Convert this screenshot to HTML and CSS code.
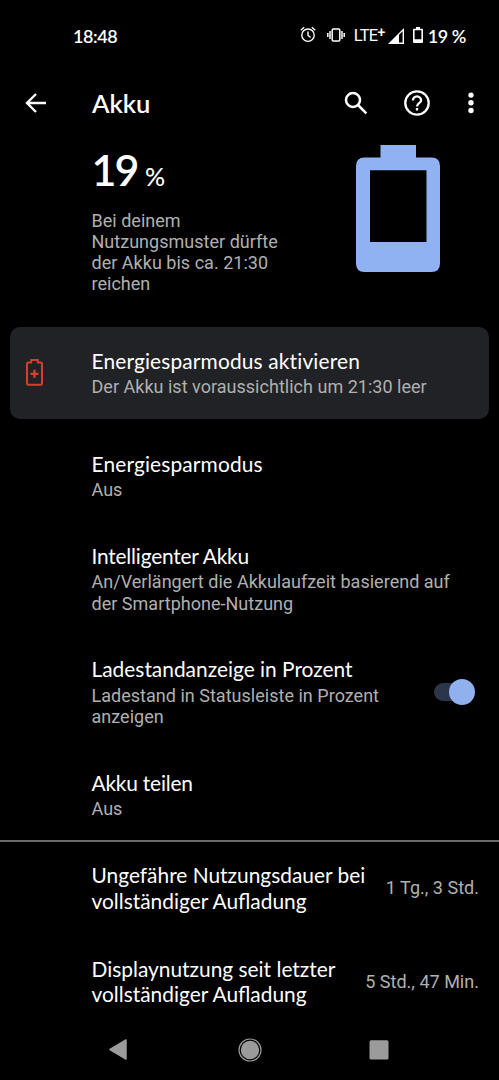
FILE: index.html
```
<!DOCTYPE html>
<html lang="de">
<head>
	<meta charset="utf-8">
	<title>Akku</title>
	<link rel="stylesheet" href="styles.css">
</head>
<body>
<div class="phone">
	<div class="status">
		<span class="clock">18:48</span>
		<div class="status-icons">
			<svg class="alarm" width="16" height="17" viewBox="0 0 16 17" fill="none" stroke="#fff" stroke-width="1.4">
				<circle cx="8" cy="9.2" r="6.2"/>
				<path d="M.8 4.2l3.4-2.9M15.2 4.2l-3.4-2.9M8 5.5v4l2.6 1.8"/>
			</svg>
			<svg class="vibrate" width="18" height="14" viewBox="0 0 18 14" fill="none" stroke="#fff" stroke-width="1.5">
				<rect x="5.2" y="1" width="7.6" height="12" rx="1"/>
				<path d="M3 3v8M15 3v8M.8 5v4M17.2 5v4"/>
			</svg>
			<span class="lte">LTE<sup>+</sup></span>
			<svg class="signal" width="16" height="16" viewBox="0 0 16 16">
				<path fill="#fff" fill-rule="evenodd" d="M16 0v16H0zM11 6.8V14.5h3.6V3.2z"/>
			</svg>
			<svg class="cell" width="10" height="16" viewBox="0 0 10 16">
				<path fill="#fff" fill-rule="evenodd" d="M3 0h4v1.7h2q1 0 1 1V15q0 1-1 1H1q-1 0-1-1V2.7q0-1 1-1h2zM1.6 3.3v9h6.8v-9z"/>
			</svg>
			<span class="level">19 %</span>
		</div>
	</div>

	<div class="toolbar">
		<svg class="back" width="22" height="20" viewBox="0 0 22 20" fill="none" stroke="#fff" stroke-width="2.4">
			<path d="M21 10H2M11 1L2 10l9 9"/>
		</svg>
		<h1>Akku</h1>
		<svg class="search" width="24" height="24" viewBox="0 0 24 24" fill="none" stroke="#fff" stroke-width="2.5">
			<circle cx="9" cy="9" r="7"/>
			<path d="M14 14l8.3 8.3"/>
		</svg>
		<svg class="help" width="26" height="26" viewBox="0 0 26 26" fill="none" stroke="#fff" stroke-width="2.3">
			<circle cx="13" cy="13" r="11.7"/>
			<path d="M8.9 10.4a4.1 4.1 0 1 1 8.2 0c0 2.6-4.1 3-4.1 6"/>
			<path d="M13 18v2.5"/>
		</svg>
		<svg class="more" width="6" height="22" viewBox="0 0 6 22" fill="#fff">
			<circle cx="3" cy="3.1" r="2.7"/>
			<circle cx="3" cy="10.8" r="2.7"/>
			<circle cx="3" cy="18.5" r="2.7"/>
		</svg>
	</div>

	<div class="summary">
		<div class="charge">
			<div class="percent">19 <small>%</small></div>
			<p class="sub">Bei deinem<br>Nutzungsmuster dürfte<br>der Akku bis ca. 21:30<br>reichen</p>
		</div>
		<svg class="battery" width="84" height="127" viewBox="0 0 84 127">
			<path fill="#91b2f2" fill-rule="evenodd" d="M24.500 0h35.500v12.500h15.500q8.500 0 8.500 8.500v97.500q0 8.500-8.500 8.500h-67q-8.500 0-8.500-8.500V21q0-8.500 8.500-8.500h16zM14 25.300v71.700h56.500v-71.700z"/>
		</svg>
	</div>

	<div class="tip">
		<svg class="tip-icon" width="17" height="27" viewBox="0 0 17 27" fill="none" stroke="#d53f30" stroke-width="2">
			<path d="M5.200 1h6.600v2.600h2.700q1.500 0 1.500 1.500v19.200q0 1.500-1.500 1.500h-12q-1.500 0-1.500-1.500V5.100q0-1.500 1.500-1.500h2.700z"/>
			<path stroke-width="2.300" d="M8.500 10.800v8M4.500 14.800h8"/>
		</svg>
		<div class="text">
			<div class="title wide">Energiesparmodus aktivieren</div>
			<div class="sub">Der Akku ist voraussichtlich um 21:30 leer</div>
		</div>
	</div>

	<div class="list">
		<div class="item">
			<div class="text">
				<div class="title wide">Energiesparmodus</div>
				<div class="sub">Aus</div>
			</div>
		</div>
		<div class="item">
			<div class="text">
				<div class="title narrow">Intelligenter Akku</div>
				<div class="sub">An/Verlängert die Akkulaufzeit basierend auf<br>der Smartphone-Nutzung</div>
			</div>
		</div>
		<div class="item">
			<div class="text">
				<div class="title">Ladestandanzeige in Prozent</div>
				<div class="sub">Ladestand in Statusleiste in Prozent<br>anzeigen</div>
			</div>
			<div class="switch"><span class="thumb"></span></div>
		</div>
		<div class="item">
			<div class="text">
				<div class="title narrow">Akku teilen</div>
				<div class="sub">Aus</div>
			</div>
		</div>
	</div>

	<div class="usage">
		<div class="item">
			<div class="title">Ungefähre Nutzungsdauer bei<br>vollständiger Aufladung</div>
			<span class="sub">1 Tg., 3 Std.</span>
		</div>
		<div class="item">
			<div class="title">Displaynutzung seit letzter<br>vollständiger Aufladung</div>
			<span class="sub">5 Std., 47 Min.</span>
		</div>
	</div>

	<div class="nav">
		<svg width="18" height="21" viewBox="0 0 18 21" fill="#9b9b9b" stroke="#9b9b9b" stroke-width="1.500" stroke-linejoin="round">
			<path d="M17 1v19L1 10.500z"/>
		</svg>
		<svg class="home" width="24" height="24" viewBox="0 0 24 24" fill="#9b9b9b">
			<circle cx="12" cy="12" r="9.200"/>
			<circle cx="12" cy="12" r="11" fill="none" stroke="#9b9b9b" stroke-width="1.200"/>
		</svg>
		<svg width="20" height="20" viewBox="0 0 20 20" fill="#9b9b9b">
			<rect x=".5" y=".3" width="19" height="19.200" rx="1.500"/>
		</svg>
	</div>
</div>
</body>
</html>
```
FILE: styles.css
```
* {
	box-sizing: border-box;
}
body, h1, p {
	margin: 0;
	padding: 0;
}
body {
	background: #000;
	color: #fff;
	font-family: Lato, "Open Sans", sans-serif;
}
svg {
	display: block;
	flex: none;
}
.phone {
	display: flex;
	flex-direction: column;
	width: 499px;
	height: 1080px;
	overflow: hidden;
	background: #000;
}
.status {
	display: flex;
	flex: none;
	align-items: center;
	justify-content: space-between;
	height: 71px;
	padding: 0 33px 0 73px;
	font-size: 18px;
	font-weight: 600;
	letter-spacing: -.4px;
	white-space: nowrap;
}
.status-icons {
	display: flex;
	align-items: center;
}
.alarm {
	margin-top: -2px;
}
.vibrate {
	margin: -1px 0 0 11px;
}
.lte {
	margin-left: 9px;
	font: 16.5px/20px Roboto, sans-serif;
	letter-spacing: -.7px;
}
.lte sup {
	font-size: 14px;
	font-weight: 500;
	line-height: 0;
	vertical-align: 4px;
}
.signal {
	margin-left: 3px;
}
.cell {
	margin: -2px 0 0 9px;
}
.level {
	margin-left: 5px;
}
.toolbar {
	display: flex;
	flex: none;
	align-items: center;
	height: 64px;
	padding: 0 25px;
}
.toolbar h1 {
	margin: 0 0 0 45px;
	font-size: 25.5px;
	line-height: 30px;
	font-weight: 600;
}
.search {
	margin-left: auto;
}
.help {
	margin-left: 36px;
}
.more {
	margin-left: 38px;
}
.summary {
	display: flex;
	flex: none;
	justify-content: space-between;
	height: 192px;
	padding: 10px 59px 0 91.5px;
}
.percent {
	height: 64.6px;
	font-size: 43px;
	line-height: 49px;
	font-weight: 600;
	letter-spacing: -2px;
}
.percent small {
	margin-left: -1px;
	font-size: 25px;
	font-weight: 500;
}
.sub {
	color: #b0b0b0;
	font: 18px/21.3px Roboto, sans-serif;
	letter-spacing: .02px;
	white-space: nowrap;
}
.title {
	color: #fff;
	font-size: 20.9px;
	line-height: 25.8px;
	white-space: nowrap;
}
.title.wide {
	letter-spacing: .15px;
}
.title.narrow {
	letter-spacing: -.2px;
}
.text .sub {
	margin-top: 2.5px;
}
.item {
	display: flex;
	align-items: center;
	padding: 22.4px 20px 20px 91.5px;
}
.tip {
	display: flex;
	flex: none;
	align-items: flex-start;
	width: 479px;
	height: 92px;
	margin: 0 auto;
	padding: 21px 16px 0;
	border-radius: 10px;
	background: #212225;
}
.tip-icon {
	margin-top: 11px;
}
.tip .text {
	margin-left: 48.5px;
}
.list {
	padding: 9.7px 0 .8px;
}
.switch {
	display: flex;
	align-items: center;
	width: 37px;
	height: 18px;
	margin: 0 8px 0 auto;
	border-radius: 9px;
	background: #2b364a;
}
.thumb {
	width: 26px;
	height: 26px;
	margin: 0 -4px 0 auto;
	border-radius: 50%;
	background: #91b0ee;
}
.usage {
	border-top: 2px solid #6b6b6b;
}
.usage .item {
	padding: 20px 20px 22px 91.5px;
}
.usage .sub {
	margin-left: auto;
}
.nav {
	display: flex;
	flex: none;
	align-items: center;
	justify-content: space-between;
	margin-top: auto;
	height: 50px;
	padding: 0 110px 11px 109px;
}
.home {
	margin-left: 3px;
}
```
